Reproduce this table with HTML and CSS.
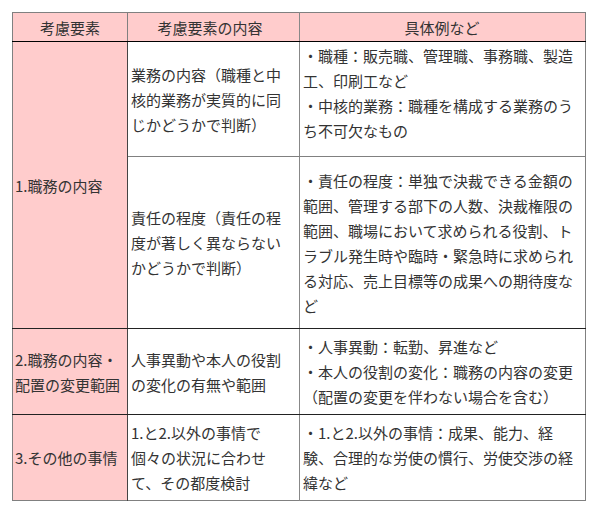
FILE: index.html
```html
<!DOCTYPE html>
<html lang="ja">
<head>
<meta charset="utf-8">
<title>考慮要素</title>
<link rel="stylesheet" href="styles.css">
</head>
<body>
<table class="factors">
  <colgroup>
    <col class="c1">
    <col class="c2">
    <col class="c3">
  </colgroup>
  <thead>
    <tr class="head">
      <th class="k">考慮要素</th>
      <th class="d">考慮要素の内容</th>
      <th class="e">具体例など</th>
    </tr>
  </thead>
  <tbody>
    <tr class="r1a">
      <td class="k" rowspan="2">1.職務の内容</td>
      <td class="d">業務の内容（職種と中核的業務が実質的に同じかどうかで判断）</td>
      <td class="e top">・職種：販売職、管理職、事務職、製造工、印刷工など<br>・中核的業務：職種を構成する業務のうち不可欠なもの</td>
    </tr>
    <tr class="r1b">
      <td class="d">責任の程度（責任の程度が著しく異ならないかどうかで判断）</td>
      <td class="e">・責任の程度：単独で決裁できる金額の範囲、管理する部下の人数、決裁権限の範囲、職場において求められる役割、トラブル発生時や臨時・緊急時に求められる対応、売上目標等の成果への期待度など</td>
    </tr>
    <tr class="r2">
      <td class="k">2.職務の内容・配置の変更範囲</td>
      <td class="d">人事異動や本人の役割の変化の有無や範囲</td>
      <td class="e">・人事異動：転勤、昇進など<br>・本人の役割の変化：職務の内容の変更（配置の変更を伴わない場合を含む）</td>
    </tr>
    <tr class="r3">
      <td class="k">3.その他の事情</td>
      <td class="d">1.と2.以外の事情で<br>個々の状況に合わせて、その都度検討</td>
      <td class="e">・1.と2.以外の事情：成果、能力、経<br>験、合理的な労使の慣行、労使交渉の経緯など</td>
    </tr>
  </tbody>
</table>
</body>
</html>
```
FILE: styles.css
```css
html, body {
  margin: 0;
  padding: 0;
  background: #ffffff;
}

body {
  padding: 12px;
  font-family: "Noto Sans CJK JP", "Noto Sans", sans-serif;
  font-size: 15px;
  line-height: 25px;
  color: #333333;
}

.factors {
  border-collapse: collapse;
  table-layout: fixed;
  width: 573px;
  border: 1px solid #808080;
}

.c1 { width: 115px; }
.c2 { width: 172px; }
.c3 { width: 286px; }

.factors th,
.factors td {
  padding: 0 4px 0 3px;
  vertical-align: middle;
  text-align: left;
  font-weight: normal;
}

.factors th {
  background: #ffcccc;
  text-align: center;
  height: 28px;
  border-bottom: 1px solid #000000;
}

.factors .k {
  background: #ffcccc;
  padding-left: 2px;
  padding-right: 2px;
  border-right: 1px solid #444444;
}

.factors th.k {
  border-right: 1px solid #808080;
}

.factors .d {
  padding-right: 10px;
  border-right: 1px solid #888888;
}

.factors td.top {
  vertical-align: top;
  padding-top: 1px;
}

.r1a td { height: 113px; border-bottom: 1px solid #808080; }
.r1b td { height: 171px; }
.r2 td { height: 85px; }
.r3 td { height: 85px; }

.r1a td.k,
.r1b td,
.r2 td {
  border-bottom: 1px solid #222222;
}
```
